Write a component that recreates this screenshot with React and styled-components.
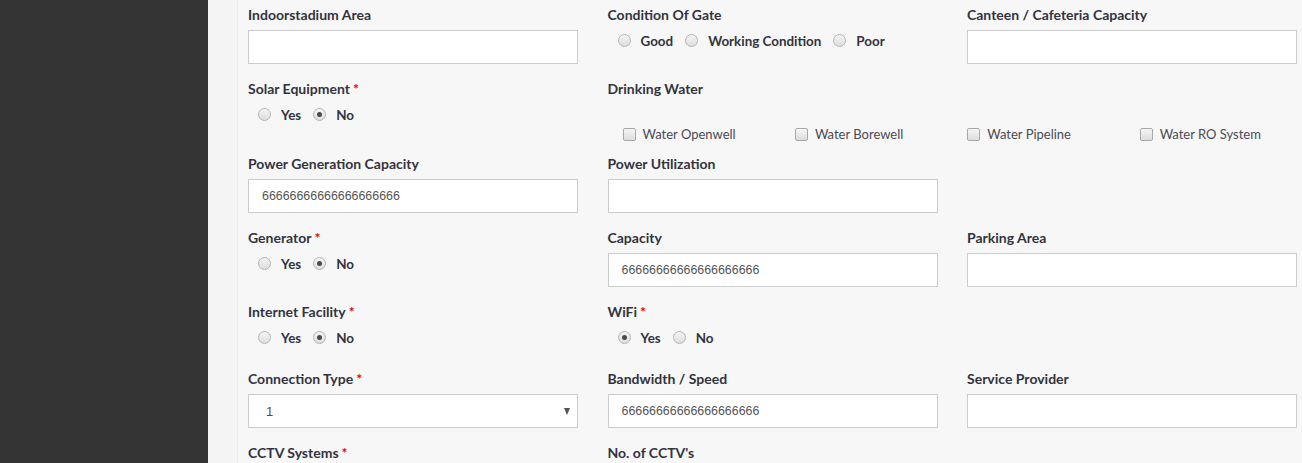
import styled, { createGlobalStyle } from 'styled-components';

const GlobalStyle = createGlobalStyle`
  html, body {
    margin: 0;
    padding: 0;
    height: 100%;
    overflow: hidden;
    background: #f7f7f7;
  }
  * { box-sizing: border-box; }
`;

const SIXES = '66666666666666666666';

const rows = [
  [
    { label: 'Indoorstadium Area', type: 'input' },
    { label: 'Condition Of Gate', type: 'radio', options: ['Good', 'Working Condition', 'Poor'] },
    { label: 'Canteen / Cafeteria Capacity', type: 'input' },
  ],
  [
    { label: 'Solar Equipment', required: true, type: 'radio', options: ['Yes', 'No'], checked: 'No' },
    {
      label: 'Drinking Water',
      type: 'checks',
      span: 2,
      options: ['Water Openwell', 'Water Borewell', 'Water Pipeline', 'Water RO System'],
    },
  ],
  [
    { label: 'Power Generation Capacity', type: 'input', value: SIXES },
    { label: 'Power Utilization', type: 'input' },
    null,
  ],
  [
    { label: 'Generator', required: true, type: 'radio', options: ['Yes', 'No'], checked: 'No' },
    { label: 'Capacity', type: 'input', value: SIXES },
    { label: 'Parking Area', type: 'input' },
  ],
  [
    { label: 'Internet Facility', required: true, type: 'radio', options: ['Yes', 'No'], checked: 'No' },
    { label: 'WiFi', required: true, type: 'radio', options: ['Yes', 'No'], checked: 'Yes' },
    null,
  ],
  [
    { label: 'Connection Type', required: true, type: 'select', value: '1' },
    { label: 'Bandwidth / Speed', type: 'input', value: SIXES },
    { label: 'Service Provider', type: 'input' },
  ],
  [
    { label: 'CCTV Systems', required: true, type: 'none' },
    { label: "No. of CCTV's", type: 'none' },
    null,
  ],
];

const Control = ({ field }) => {
  if (field.type === 'none') return null;
  if (field.type === 'input') {
    return <TextInput type="text" defaultValue={field.value || ''} />;
  }
  if (field.type === 'select') {
    return (
      <SelectWrap>
        <Select defaultValue={field.value}>
          <option value="1">1</option>
          <option value="2">2</option>
        </Select>
        <Caret />
      </SelectWrap>
    );
  }
  if (field.type === 'radio') {
    return (
      <RadioGroup>
        {field.options.map((opt) => (
          <RadioOption key={opt}>
            <RadioDot $checked={field.checked === opt} />
            {opt}
          </RadioOption>
        ))}
      </RadioGroup>
    );
  }
  return (
    <CheckGrid>
      {field.options.map((opt) => (
        <CheckOption key={opt}>
          <CheckBox />
          {opt}
        </CheckOption>
      ))}
    </CheckGrid>
  );
};

const App = () => {
  return (
    <>
      <GlobalStyle />
      <Shell>
        <Sidebar />
        <Main>
          <Panel>
            <FormGrid>
              {rows.flat().map((field, i) =>
                field ? (
                  <FormGroup key={i} $span={field.span || 1}>
                    <Label>
                      {field.label}
                      {field.required && <Req>*</Req>}
                    </Label>
                    <Control field={field} />
                  </FormGroup>
                ) : (
                  <FormGroup key={i} />
                )
              )}
            </FormGrid>
          </Panel>
        </Main>
      </Shell>
    </>
  );
};

export default App;

const Shell = styled.div`
  display: flex;
  min-height: 100vh;
`;

const Sidebar = styled.aside`
  flex: 0 0 208px;
  background: #333333;
`;

const Main = styled.main`
  flex: 1;
  padding-left: 29px;
  background: #f4f4f4;
`;

const Panel = styled.section`
  min-height: 100vh;
  background: #f7f7f7;
  border-left: 1px solid #ededed;
  padding: 6px 0 0 10px;
`;

const FormGrid = styled.div`
  display: grid;
  grid-template-columns: repeat(3, 330px);
  column-gap: 29.5px;
  row-gap: 16px;
  align-items: start;
`;

const FormGroup = styled.div`
  grid-column: span ${({ $span }) => $span || 1};
  min-width: 0;
`;

const Label = styled.label`
  display: block;
  height: 18px;
  margin-bottom: 6px;
  font-family: Lato, 'Open Sans', sans-serif;
  font-weight: 700;
  font-size: 14px;
  line-height: 18px;
  color: #333340;
  white-space: nowrap;
`;

const Req = styled.span`
  color: #ee0000;
  margin-left: 3px;
`;

const TextInput = styled.input`
  display: block;
  width: 100%;
  height: 34px;
  margin: 0;
  padding: 0 12px 0 13px;
  background: #fff;
  border: 1px solid #cccccc;
  border-radius: 0;
  font-family: 'Liberation Sans', Arial, sans-serif;
  font-size: 12.4px;
  color: #555555;
  outline: none;
`;

const SelectWrap = styled.div`
  position: relative;
  width: 100%;
`;

const Select = styled.select`
  display: block;
  width: 100%;
  height: 34px;
  margin: 0;
  padding: 0 24px 0 13px;
  appearance: none;
  background: #fff;
  border: 1px solid #cccccc;
  border-radius: 0;
  font-family: 'Liberation Sans', Arial, sans-serif;
  font-size: 13px;
  color: #5a4a40;
  outline: none;
  text-indent: 4px;
`;

const Caret = styled.span`
  position: absolute;
  right: 8px;
  top: 14px;
  width: 0;
  height: 0;
  border-left: 3.5px solid transparent;
  border-right: 3.5px solid transparent;
  border-top: 7px solid #555;
  pointer-events: none;
`;

const RadioGroup = styled.div`
  display: flex;
  align-items: center;
  gap: 12px;
  height: 22px;
  margin-bottom: 5px;
  padding-left: 10px;
`;

const RadioOption = styled.label`
  display: inline-flex;
  align-items: center;
  gap: 10px;
  font-family: Lato, 'Open Sans', sans-serif;
  font-weight: 700;
  font-size: 13.4px;
  color: #333340;
  white-space: nowrap;
`;

const RadioDot = styled.span`
  position: relative;
  top: -1px;
  width: 13px;
  height: 13px;
  border-radius: 50%;
  border: 1px solid #b4b4b4;
  background: linear-gradient(#f4f4f4, #dedede);
  flex: 0 0 auto;

  &::after {
    content: '';
    display: ${({ $checked }) => ($checked ? 'block' : 'none')};
    position: absolute;
    left: 3px;
    top: 3px;
    width: 5px;
    height: 5px;
    border-radius: 50%;
    background: #4a4a4a;
  }
`;

const CheckGrid = styled.div`
  display: grid;
  grid-template-columns: repeat(4, 1fr);
  margin-top: 28px;
  margin-bottom: -3px;
  height: 16px;
`;

const CheckOption = styled.label`
  display: flex;
  align-items: center;
  gap: 7px;
  padding-left: 15px;
  font-family: Lato, 'Open Sans', sans-serif;
  font-weight: 400;
  font-size: 13px;
  line-height: 16px;
  color: #4a4a55;
  white-space: nowrap;
`;

const CheckBox = styled.span`
  width: 13px;
  height: 13px;
  border-radius: 2px;
  border: 1px solid #a8a8a8;
  background: linear-gradient(#f6f6f6, #dcdcdc);
  flex: 0 0 auto;
`;
